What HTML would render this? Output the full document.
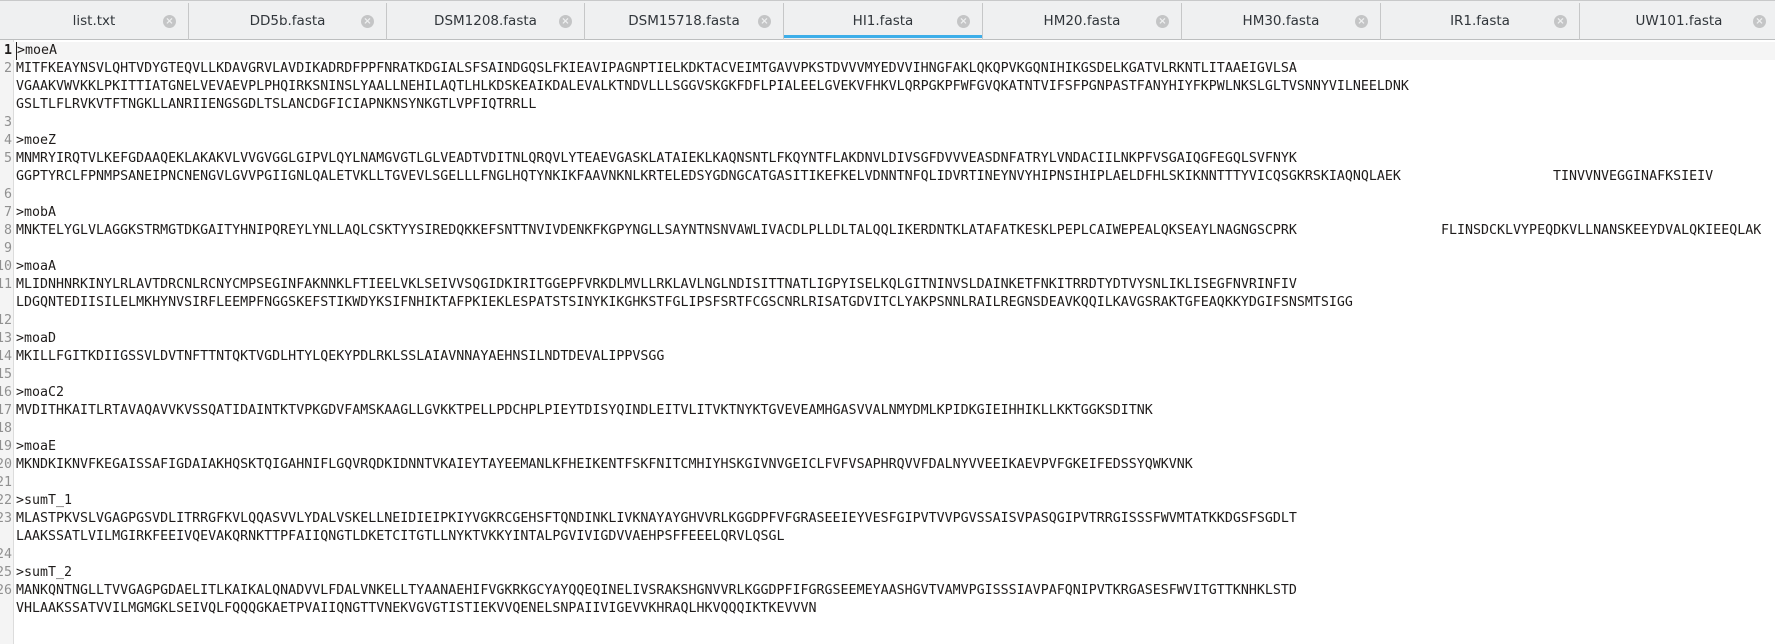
<!DOCTYPE html>
<html><head><meta charset="utf-8"><style>
*{margin:0;padding:0;box-sizing:border-box}
body{width:1775px;height:644px;overflow:hidden;background:#fff;position:relative;font-family:"DejaVu Sans Mono","Liberation Mono",monospace}
.tabbar{position:absolute;left:0;top:0;width:1775px;height:40px;background:#eff0f1;border-top:1px solid #c8c9ca;border-bottom:1px solid #bcbebf;z-index:2}
.tab{position:absolute;top:2px;height:37px;border-right:1px solid #c6c7c8;font-family:"DejaVu Sans","Liberation Sans",sans-serif;font-size:13.5px;color:#31363b;text-align:center;line-height:36px}
.tab .x{position:absolute;right:12px;top:12px;width:13px;height:13px;border-radius:50%;background:#c4c5c6;color:#eff0f1;font-size:10px;line-height:13px;text-align:center;font-weight:bold}
.tab.act:after{content:"";position:absolute;left:0;right:0;bottom:2px;height:3px;background:#3daee9}
.gutter{position:absolute;left:0;top:40px;width:14px;height:604px;background:#f4f4f4;border-right:1px solid #dcdcdc}
.rows{position:absolute;left:0;top:42px;width:1775px}
.r{position:relative;height:18px;line-height:18px;font-size:13.3px;color:#1f1c1b;white-space:pre}
.r .n{position:absolute;right:calc(100% - 12px);color:#909090;text-align:right}
.r .t{position:absolute;left:16px}
.r.cur{background:#f5f5f5}
.r.cur .n{color:#1f1c1b;font-weight:bold}
.r.cur .t{border-left:1px solid #1f1c1b;padding-left:0}
</style></head><body>
<div class="tabbar">
<div class="tab" style="left:0;width:189px">list.txt<span class="x">×</span></div>
<div class="tab" style="left:189px;width:198px">DD5b.fasta<span class="x">×</span></div>
<div class="tab" style="left:387px;width:198px">DSM1208.fasta<span class="x">×</span></div>
<div class="tab" style="left:585px;width:199px">DSM15718.fasta<span class="x">×</span></div>
<div class="tab act" style="left:784px;width:199px">HI1.fasta<span class="x">×</span></div>
<div class="tab" style="left:983px;width:199px">HM20.fasta<span class="x">×</span></div>
<div class="tab" style="left:1182px;width:199px">HM30.fasta<span class="x">×</span></div>
<div class="tab" style="left:1381px;width:199px">IR1.fasta<span class="x">×</span></div>
<div class="tab" style="left:1580px;width:199px">UW101.fasta<span class="x">×</span></div>
</div>
<div class="gutter"></div>
<div class="rows">
<div class="r cur"><span class="n">1</span><span class="t">&gt;moeA</span></div>
<div class="r"><span class="n">2</span><span class="t">MITFKEAYNSVLQHTVDYGTEQVLLKDAVGRVLAVDIKADRDFPPFNRATKDGIALSFSAINDGQSLFKIEAVIPAGNPTIELKDKTACVEIMTGAVVPKSTDVVVMYEDVVIHNGFAKLQKQPVKGQNIHIKGSDELKGATVLRKNTLITAAEIGVLSA</span></div>
<div class="r"><span class="t">VGAAKVWVKKLPKITTIATGNELVEVAEVPLPHQIRKSNINSLYAALLNEHILAQTLHLKDSKEAIKDALEVALKTNDVLLLSGGVSKGKFDFLPIALEELGVEKVFHKVLQRPGKPFWFGVQKATNTVIFSFPGNPASTFANYHIYFKPWLNKSLGLTVSNNYVILNEELDNK</span></div>
<div class="r"><span class="t">GSLTLFLRVKVTFTNGKLLANRIIENGSGDLTSLANCDGFICIAPNKNSYNKGTLVPFIQTRRLL</span></div>
<div class="r"><span class="n">3</span></div>
<div class="r"><span class="n">4</span><span class="t">&gt;moeZ</span></div>
<div class="r"><span class="n">5</span><span class="t">MNMRYIRQTVLKEFGDAAQEKLAKAKVLVVGVGGLGIPVLQYLNAMGVGTLGLVEADTVDITNLQRQVLYTEAEVGASKLATAIEKLKAQNSNTLFKQYNTFLAKDNVLDIVSGFDVVVEASDNFATRYLVNDACIILNKPFVSGAIQGFEGQLSVFNYK</span></div>
<div class="r"><span class="t">GGPTYRCLFPNMPSANEIPNCNENGVLGVVPGIIGNLQALETVKLLTGVEVLSGELLLFNGLHQTYNKIKFAAVNKNLKRTELEDSYGDNGCATGASITIKEFKELVDNNTNFQLIDVRTINEYNVYHIPNSIHIPLAELDFHLSKIKNNTTTYVICQSGKRSKIAQNQLAEK</span><span class="t" style="left:1553px">TINVVNVEGGINAFKSIEIV</span></div>
<div class="r"><span class="n">6</span></div>
<div class="r"><span class="n">7</span><span class="t">&gt;mobA</span></div>
<div class="r"><span class="n">8</span><span class="t">MNKTELYGLVLAGGKSTRMGTDKGAITYHNIPQREYLYNLLAQLCSKTYYSIREDQKKEFSNTTNVIVDENKFKGPYNGLLSAYNTNSNVAWLIVACDLPLLDLTALQQLIKERDNTKLATAFATKESKLPEPLCAIWEPEALQKSEAYLNAGNGSCPRK</span><span class="t" style="left:1441px">FLINSDCKLVYPEQDKVLLNANSKEEYDVALQKIEEQLAK</span></div>
<div class="r"><span class="n">9</span></div>
<div class="r"><span class="n">10</span><span class="t">&gt;moaA</span></div>
<div class="r"><span class="n">11</span><span class="t">MLIDNHNRKINYLRLAVTDRCNLRCNYCMPSEGINFAKNNKLFTIEELVKLSEIVVSQGIDKIRITGGEPFVRKDLMVLLRKLAVLNGLNDISITTNATLIGPYISELKQLGITNINVSLDAINKETFNKITRRDTYDTVYSNLIKLISEGFNVRINFIV</span></div>
<div class="r"><span class="t">LDGQNTEDIISILELMKHYNVSIRFLEEMPFNGGSKEFSTIKWDYKSIFNHIKTAFPKIEKLESPATSTSINYKIKGHKSTFGLIPSFSRTFCGSCNRLRISATGDVITCLYAKPSNNLRAILREGNSDEAVKQQILKAVGSRAKTGFEAQKKYDGIFSNSMTSIGG</span></div>
<div class="r"><span class="n">12</span></div>
<div class="r"><span class="n">13</span><span class="t">&gt;moaD</span></div>
<div class="r"><span class="n">14</span><span class="t">MKILLFGITKDIIGSSVLDVTNFTTNTQKTVGDLHTYLQEKYPDLRKLSSLAIAVNNAYAEHNSILNDTDEVALIPPVSGG</span></div>
<div class="r"><span class="n">15</span></div>
<div class="r"><span class="n">16</span><span class="t">&gt;moaC2</span></div>
<div class="r"><span class="n">17</span><span class="t">MVDITHKAITLRTAVAQAVVKVSSQATIDAINTKTVPKGDVFAMSKAAGLLGVKKTPELLPDCHPLPIEYTDISYQINDLEITVLITVKTNYKTGVEVEAMHGASVVALNMYDMLKPIDKGIEIHHIKLLKKTGGKSDITNK</span></div>
<div class="r"><span class="n">18</span></div>
<div class="r"><span class="n">19</span><span class="t">&gt;moaE</span></div>
<div class="r"><span class="n">20</span><span class="t">MKNDKIKNVFKEGAISSAFIGDAIAKHQSKTQIGAHNIFLGQVRQDKIDNNTVKAIEYTAYEEMANLKFHEIKENTFSKFNITCMHIYHSKGIVNVGEICLFVFVSAPHRQVVFDALNYVVEEIKAEVPVFGKEIFEDSSYQWKVNK</span></div>
<div class="r"><span class="n">21</span></div>
<div class="r"><span class="n">22</span><span class="t">&gt;sumT_1</span></div>
<div class="r"><span class="n">23</span><span class="t">MLASTPKVSLVGAGPGSVDLITRRGFKVLQQASVVLYDALVSKELLNEIDIEIPKIYVGKRCGEHSFTQNDINKLIVKNAYAYGHVVRLKGGDPFVFGRASEEIEYVESFGIPVTVVPGVSSAISVPASQGIPVTRRGISSSFWVMTATKKDGSFSGDLT</span></div>
<div class="r"><span class="t">LAAKSSATLVILMGIRKFEEIVQEVAKQRNKTTPFAIIQNGTLDKETCITGTLLNYKTVKKYINTALPGVIVIGDVVAEHPSFFEEELQRVLQSGL</span></div>
<div class="r"><span class="n">24</span></div>
<div class="r"><span class="n">25</span><span class="t">&gt;sumT_2</span></div>
<div class="r"><span class="n">26</span><span class="t">MANKQNTNGLLTVVGAGPGDAELITLKAIKALQNADVVLFDALVNKELLTYAANAEHIFVGKRKGCYAYQQEQINELIVSRAKSHGNVVRLKGGDPFIFGRGSEEMEYAASHGVTVAMVPGISSSIAVPAFQNIPVTKRGASESFWVITGTTKNHKLSTD</span></div>
<div class="r"><span class="t">VHLAAKSSATVVILMGMGKLSEIVQLFQQQGKAETPVAIIQNGTTVNEKVGVGTISTIEKVVQENELSNPAIIVIGEVVKHRAQLHKVQQQIKTKEVVVN</span></div>
</div>
</body></html>
